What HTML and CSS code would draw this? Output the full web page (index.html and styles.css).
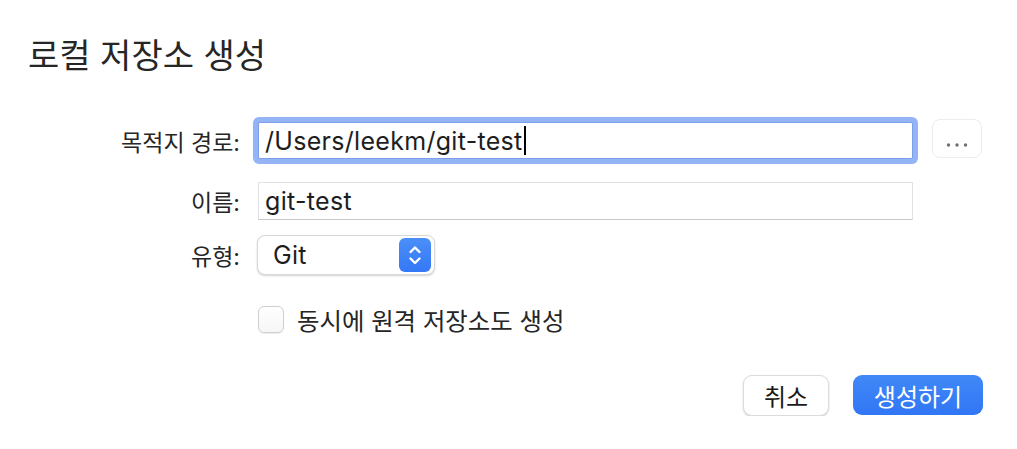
FILE: index.html
```html
<!DOCTYPE html>
<html lang="ko">
<head>
<meta charset="utf-8">
<title>로컬 저장소 생성</title>
<link rel="stylesheet" href="styles.css">
</head>
<body>
<div class="dialog">
  <h1 class="title">로컬 저장소 생성</h1>
  <div class="form">
    <div class="row row-path">
      <label class="label">목적지 경로:</label>
      <div class="input focused"><span class="value">/Users/leekm/git-test</span><span class="caret"></span></div>
      <button class="more" type="button" aria-label="찾아보기">
        <svg width="50" height="39" viewBox="0 0 50 39"><circle cx="16.5" cy="26" r="1.7" fill="#707070"/><circle cx="25" cy="26" r="1.7" fill="#707070"/><circle cx="33.5" cy="26" r="1.7" fill="#707070"/></svg>
      </button>
    </div>
    <div class="row row-name">
      <label class="label">이름:</label>
      <div class="input"><span class="value">git-test</span></div>
    </div>
    <div class="row row-type">
      <label class="label">유형:</label>
      <div class="select">
        <span class="value">Git</span>
        <span class="stepper">
          <svg width="32" height="34" viewBox="0 0 32 34"><path d="M11.5 14 L16 9.5 L20.5 14" fill="none" stroke="#fff" stroke-width="2.4" stroke-linecap="round" stroke-linejoin="round"/><path d="M11.5 20.5 L16 25 L20.5 20.5" fill="none" stroke="#fff" stroke-width="2.4" stroke-linecap="round" stroke-linejoin="round"/></svg>
        </span>
      </div>
    </div>
    <div class="row row-check">
      <span class="checkbox"></span>
      <span class="check-label">동시에 원격 저장소도 생성</span>
    </div>
  </div>
  <div class="actions">
    <button class="btn btn-cancel" type="button">취소</button>
    <button class="btn btn-primary" type="button">생성하기</button>
  </div>
</div>
</body>
</html>
```
FILE: styles.css
```css
html, body {
  margin: 0;
  padding: 0;
  background: #ffffff;
}
body {
  font-family: "Inter", "Noto Sans CJK KR", sans-serif;
  color: #262626;
}
.dialog {
  padding: 36px 34px 0 28px;
}
.title {
  margin: 0 0 46px;
  font-size: 34px;
  line-height: 40px;
  font-weight: 400;
  color: #262626;
}
.form {
  display: flex;
  flex-direction: column;
}
.row {
  display: flex;
  align-items: center;
}
.label {
  width: 212px;
  margin-right: 18px;
  text-align: right;
  font-size: 23px;
  color: #262626;
}
.row-path { height: 37px; margin-bottom: 23px; }
.row-name { height: 38px; margin-bottom: 15px; }
.row-type { height: 40px; margin-bottom: 31px; }
.row-check { height: 27px; margin-left: 230px; }

.value {
  font-size: 25px;
  letter-spacing: 0.3px;
}

.input {
  box-sizing: border-box;
  width: 655px;
  height: 100%;
  display: flex;
  align-items: center;
  padding-left: 6px;
  color: #1e1e1e;
  background: #fff;
  border: 1px solid #e2e2e2;
  border-bottom-color: #c9c9c9;
}
.input.focused {
  border: 1px solid #7d9fe9;
  box-shadow: 0 0 0 5px #95b4f5;
  border-radius: 2px;
}
.caret {
  display: inline-block;
  width: 2px;
  height: 29px;
  background: #000;
  margin-left: 1px;
}
.more {
  box-sizing: border-box;
  width: 50px;
  height: 39px;
  margin-left: 19px;
  padding: 0;
  border: 1px solid #ececec;
  border-radius: 8px;
  background: #fff;
  align-self: flex-start;
  margin-top: -3px;
}
.more svg { display: block; margin: -1px; }

.select {
  box-sizing: border-box;
  width: 178px;
  height: 40px;
  margin-left: -1px;
  display: flex;
  align-items: center;
  justify-content: space-between;
  padding: 0 3px 0 15px;
  background: #fff;
  border-radius: 8px;
  border: 0.5px solid #d8d8d8;
  box-shadow: 0 1px 2px rgba(0,0,0,0.18);
  color: #1e1e1e;
}
.stepper {
  width: 32px;
  height: 34px;
  border-radius: 6px;
  background: linear-gradient(#4b8ff8, #3478f6);
}
.stepper svg { display: block; }

.checkbox {
  box-sizing: border-box;
  width: 26px;
  height: 27px;
  border: 1px solid #d0d0d0;
  border-radius: 6px;
  background: linear-gradient(#ffffff, #f6f6f6);
  box-shadow: 0 0.5px 1px rgba(0,0,0,0.08);
}
.check-label {
  margin-left: 13px;
  font-size: 24.4px;
  color: #262626;
}

.actions {
  display: flex;
  justify-content: flex-end;
  gap: 24px;
  margin-top: 42px;
}
.btn {
  box-sizing: border-box;
  height: 41px;
  padding: 0;
  border-radius: 9px;
  font-family: "Inter", "Noto Sans CJK KR", sans-serif;
  font-size: 24px;
}
.btn-cancel {
  width: 86px;
  background: #fff;
  color: #1a1a1a;
  border: 0.5px solid #dcdcdc;
  box-shadow: 0 1px 2px rgba(0,0,0,0.2);
}
.btn-primary {
  width: 130px;
  height: 40px;
  background: linear-gradient(#4089f7, #3176f5);
  color: #fff;
  border: none;
}
```
